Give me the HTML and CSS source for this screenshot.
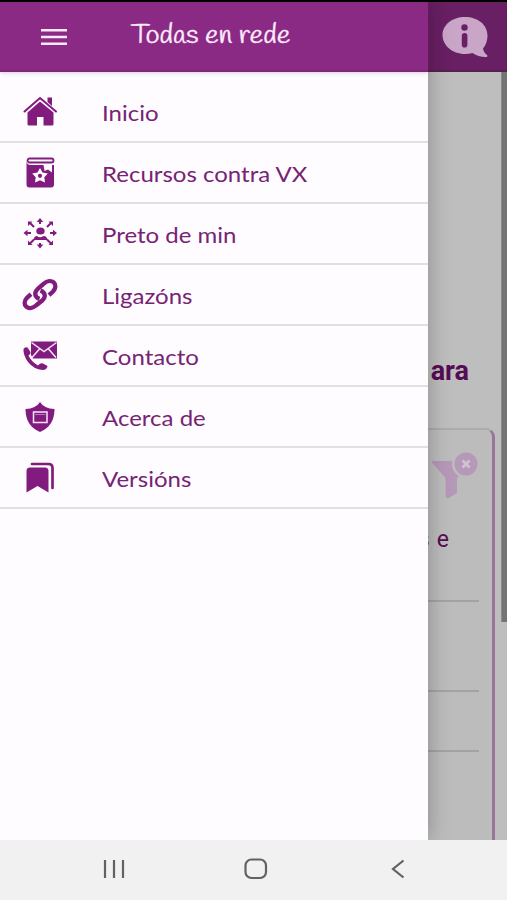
FILE: index.html
```html
<!DOCTYPE html>
<html lang="gl">
<head>
<meta charset="utf-8">
<title>Todas en rede</title>
<link rel="stylesheet" href="styles.css">
</head>
<body>
<div class="phone">
  <div class="view">
    <aside class="drawer">
      <header class="bar">
        <svg class="burger" width="28" height="18" viewBox="0 0 28 18"><path d="M1 2.200H27M1 9H27M1 15.800H27"/></svg>
        <h1 class="title">Todas en rede</h1>
      </header>
      <nav class="menu">
        <a class="item"><svg class="icon" viewBox="0 0 36 36"><path d="M25.500 3.500H30V12L25.500 8Z"/><path d="M5.500 18.500 18 7.500 31.500 18.500V30Q31.500 31.500 30 31.500H21.500V23H15V31.500H7Q5.500 31.500 5.500 30Z"/><path class="line" d="M2.500 17.500 18 4 34 17.500"/></svg><span class="label">Inicio</span></a>
        <a class="item"><svg class="icon" viewBox="0 0 36 36"><rect class="thin" x="5.500" y="3.500" width="26" height="4" rx="2"/><path d="M4.500 6.500Q5 10 9 10H32V29.500Q32 32.500 29 32.500H7.500Q4.500 32.500 4.500 29.500Z"/><path class="cut" d="M21.500 10H30V17.500L26 14.500 22.500 16ZM18 13 20.500 17.500 25.800 18.600 22.300 22.300 23 27.500 18 25.300 13 27.500 13.700 22.300 10.200 18.600 15.500 17.500Z"/><circle cx="18" cy="20.800" r="2.100"/></svg><span class="label">Recursos contra VX</span></a>
        <a class="item"><svg class="icon" viewBox="0 0 36 36"><ellipse cx="18.500" cy="15" rx="4.200" ry="3.500"/><path d="M11.500 24Q12 20 15 20 18 22.500 21.500 20 25 20 25.500 24Z"/><path class="thick" d="M18 8V4M18 27V31M9 17H4M28 17H33M12 11 8 7M25 11 29 7M12 23.500 8 27.500M25 23.500 29 27.500"/><path d="M18 2 21.300 6H14.700ZM18 32.500 21.300 28.500H14.700ZM1.500 17 5.500 13.800V20.200ZM35 17 31 13.800V20.200ZM6 5.500H10.500L6 10ZM31 5.500V10L26.500 5.500ZM6 29V24.500L10.500 29ZM31 29H26.500L31 24.500Z"/></svg><span class="label">Preto de min</span></a>
        <a class="item"><svg class="icon" viewBox="0 0 36 36"><path class="link" d="M17.500 22C12.500 20 12 15.500 15.500 12.200L21.500 6.800C29.500 0 37.500 7.500 31 14.500L27 18.200"/><path class="link" d="M18.500 13.500C23.500 15.500 24 20 20.500 23.300L14 28.500C6.500 35 -1.500 27.500 5 20.800L9 17.200"/></svg><span class="label">Ligazóns</span></a>
        <a class="item"><svg class="icon" viewBox="0 0 36 36"><path d="M9 3.500H35V20.500H11L9 17Z"/><path class="white" d="M9.500 4.500 22 13.500 34.500 4.500M10 19.500 17.500 11M34 19.500 26.500 11"/><path d="M1.500 11Q3 8.500 5.500 9.500L8.500 14Q9 16 6.500 17.500 9 23.500 16 27.500 18.500 24.500 21 25.500L25.500 28Q25 32 20.500 32 12 31.500 6 24 1 17 1.500 11Z"/></svg><span class="label">Contacto</span></a>
        <a class="item"><svg class="icon" viewBox="0 0 36 36"><path d="M18 3Q22 9.500 32.500 10 32.500 27 18 33 3.500 27 3.500 10 14 9.500 18 3Z"/><path class="white" d="M11.500 13H25V23.500H11.500Z"/><path class="white dim" d="M13 15.500H23.500"/></svg><span class="label">Acerca de</span></a>
        <a class="item"><svg class="icon" viewBox="0 0 36 36"><path d="M4.500 11Q4.500 7.500 8 7.500H23Q26.500 7.500 26.500 11V32.500L15.500 26 4.500 32.500Z"/><path class="mark" d="M10 4H26.500Q30.500 4 30.500 8V28"/></svg><span class="label">Versións</span></a>
      </nav>
    </aside>
    <main class="page">
      <div class="pagebar"><svg width="48" height="42" viewBox="0 0 48 42"><path class="bubble" d="M24 1C11 1 1.500 9 1.500 19S11 38 24 38Q28 38 31.500 37 38 41.500 46 41L46.500 39.500Q42.500 36.500 42 32.500 46.500 27 46.500 19.500C46.500 9 37 1 24 1Z"/><circle cx="23.500" cy="11.500" r="3.200"/><rect x="20.800" y="17" width="5.600" height="14.500" rx="2.800"/></svg></div>
      <div class="scroll">
        <div class="content">
          <h2 class="heading">ara</h2>
          <section class="card">
            <svg class="filter" width="48" height="48" viewBox="0 0 48 48"><path d="M1 9H31V21L26 26V41L17 46.500 14.500 45V26L1 10.500Z"/><circle class="ring" cx="35" cy="12" r="14"/><circle cx="35" cy="12" r="11.500"/><path class="x" d="M31.500 8.500 38.500 15.500M38.500 8.500 31.500 15.500"/></svg>
            <p class="text">s e</p>
            <div class="field first"></div>
            <div class="field second"></div>
            <div class="field third"></div>
          </section>
        </div>
        <div class="thumb"></div>
      </div>
    </main>
  </div>
  <footer class="nav">
    <svg width="22" height="20" viewBox="0 0 22 20"><path d="M2 1V19M11 1V19M20 1V19"/></svg>
    <svg class="home" width="24" height="22" viewBox="0 0 24 22"><rect x="1.500" y="1.500" width="20.500" height="18.500" rx="6"/></svg>
    <svg width="14" height="20" viewBox="0 0 14 20"><path d="M12.500 1.500 2 10 12.500 18.500"/></svg>
  </footer>
</div>
</body>
</html>
```
FILE: styles.css
```css
* { box-sizing: border-box; }
body { margin: 0; }
.phone {
  display: flex;
  flex-direction: column;
  width: 507px;
  height: 900px;
  overflow: hidden;
  border-top: 2px solid #000;
  background: #fefdff;
}
.view { display: flex; flex: 1; min-height: 0; }
.drawer {
  width: 428px;
  flex: none;
  z-index: 1;
  background: #fefcff;
  box-shadow: 1px 0 20px rgba(0, 0, 0, .25);
}
.bar {
  display: flex;
  align-items: center;
  height: 70px;
  padding-left: 40px;
  background: #8a2a84;
  border-bottom: 2px solid #782a74;
  box-shadow: 0 1px 4px rgba(138, 42, 132, .25);
}
.burger { margin-top: 2px; fill: none; stroke: #fbe9fb; stroke-width: 2.600; }
.title {
  margin: 2px 0 0 63px;
  color: #fdeafd;
  font: 400 25px/34px "Handlee", "Gochi Hand", "Lato", sans-serif;
  white-space: nowrap;
  transform: scaleX(1.147);
  transform-origin: left;
  -webkit-text-stroke: .3px #fdeafd;
}
.menu { padding-top: 10px; }
.item {
  display: flex;
  align-items: center;
  height: 61px;
  padding-left: 22px;
  border-bottom: 2px solid #e0dfe1;
}
.icon { width: 36px; height: 36px; fill: #821b7e; overflow: visible; }
.icon .line { fill: none; stroke: #821b7e; stroke-width: 2; stroke-linecap: round; }
.icon .thin { fill: none; stroke: #821b7e; stroke-width: 1.800; }
.icon .thick { fill: none; stroke: #821b7e; stroke-width: 2; }
.icon .link { fill: none; stroke: #821b7e; stroke-width: 4.300; stroke-linecap: butt; }
.icon .mark { fill: none; stroke: #821b7e; stroke-width: 2.700; stroke-linecap: round; }
.icon .white { fill: none; stroke: #f7e4f8; stroke-width: 1.500; }
.icon .dim { stroke: #b673b5; stroke-width: 1; }
.icon .cut { fill: #fefcff; }
.label {
  margin: 2px 0 0 44px;
  color: #772374;
  font: 400 21px/30px "Lato", sans-serif;
  white-space: nowrap;
  transform: scaleX(1.143);
  transform-origin: left;
}
.page { display: flex; flex-direction: column; flex: 1; min-width: 0; background: #bfbebf; }
.pagebar {
  flex: none;
  height: 70px;
  padding: 14px 0 0 13px;
  background: #681f63;
  border-bottom: 2px solid #58204f;
  fill: #681f63;
}
.bubble { fill: #c9a5c8; }
.scroll { display: flex; flex: 1; min-height: 0; justify-content: flex-end; }
.content {
  display: flex;
  flex-direction: column;
  align-items: flex-end;
  width: 73px;
  flex: none;
}
.heading {
  flex: none;
  margin: 282px 32px 0 0;
  color: #560c55;
  font: 700 27px/34px "Roboto", sans-serif;
}
.card {
  display: flex;
  flex-direction: column;
  align-items: flex-end;
  flex: 1;
  width: 140px;
  margin: 40px 6px 0 0;
  padding: 22px 13px 0 0;
  border-top: 2px solid #adabad;
  border-right: 3px solid #987599;
  border-radius: 0 9px 0 0;
  background: #bdbcbd;
}
.filter { flex: none; fill: #b698b8; }
.filter .ring { fill: #bdbcbd; }
.filter .x { fill: none; stroke: #d0c4d1; stroke-width: 2.600; }
.text {
  margin: 25px 30px 0 0;
  color: #560c55;
  font: 400 23px/30px "Roboto", sans-serif;
  word-spacing: 1.500px;
  white-space: nowrap;
}
.field { flex: none; width: 100px; border-bottom: 2px solid #a4a2a5; }
.first { height: 47px; }
.second { height: 90px; }
.third { height: 60px; }
.thumb { width: 6px; height: 550px; background: #737474; border-left: 1px solid #8b8b8b; }
.nav {
  z-index: 2;
  display: flex;
  align-items: center;
  justify-content: space-between;
  flex: none;
  height: 60px;
  padding: 0 102px 2px 103px;
  background: #f1f1f1;
  fill: none;
  stroke: #626262;
  stroke-width: 2.200;
}
.home { margin-right: 4px; }
```
